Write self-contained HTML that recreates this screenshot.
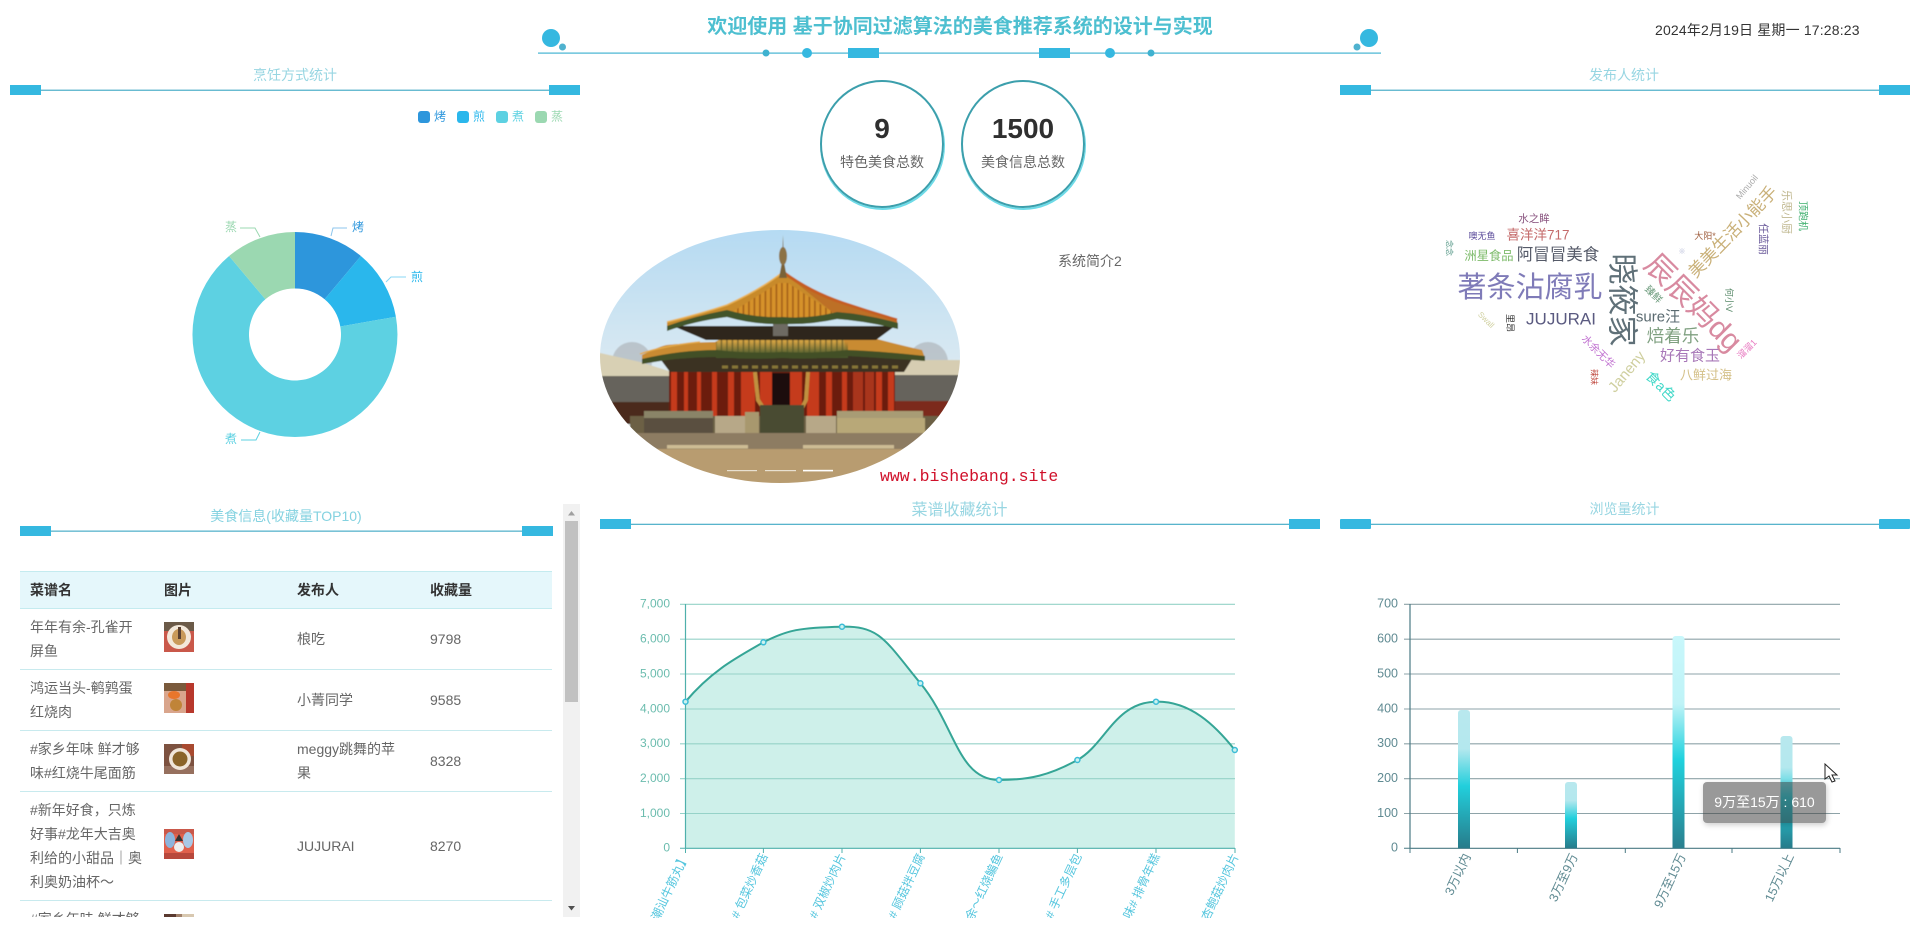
<!DOCTYPE html>
<html lang="zh-CN">
<head>
<meta charset="utf-8">
<title>基于协同过滤算法的美食推荐系统</title>
<style>
html,body{margin:0;padding:0;background:#fff;width:1920px;height:936px;overflow:hidden}
body{position:relative;font-family:"Liberation Sans","Noto Sans CJK SC",sans-serif}
svg text{font-family:"Liberation Sans","Noto Sans CJK SC",sans-serif}
#main{position:absolute;left:0;top:0}
.wrap{position:absolute;left:20px;top:571px;width:533px;height:346px;overflow:hidden}
table{border-collapse:collapse;table-layout:fixed;width:532px;font-size:14px;color:#666;line-height:24px}
th{height:36px;background:#e5f7fb;color:#333;text-align:left;padding:0 0 0 10px;font-weight:bold;border-top:1px solid #c4ebef;border-bottom:1px solid #c4ebef}
td{padding:0 0 0 10px;border-bottom:1px solid #c8eaee;white-space:nowrap;vertical-align:middle}
tr.r td{height:60px}
tr.b td{height:108px}
td svg{display:block;margin-top:-4px}
.sb{position:absolute;left:563px;top:504px;width:17px;height:413px;background:#f1f1f1}
.sb i{position:absolute;left:2px;top:17px;width:13px;height:181px;background:#c1c1c1}
.clock{position:absolute;left:1655px;top:20px;font-size:14px;line-height:20px;color:#333;white-space:nowrap;letter-spacing:.17px}
.title{position:absolute;left:560px;width:800px;top:12px;text-align:center;font-size:20px;line-height:30px;font-weight:bold;color:#4dbfd0}
.circle{position:absolute;top:80px;width:120px;height:124px;border:2.5px solid #3c9fac;border-radius:50%;box-shadow:.5px 1.5px 0 .5px #6ddbe8;text-align:center}
.circle b{display:block;font-size:28px;line-height:36px;margin-top:29px;color:#2f2f2f}
.circle span{display:block;font-size:14px;line-height:20px;color:#666;margin-top:5px}
.intro{position:absolute;left:1058px;top:251px;font-size:14px;line-height:20px;color:#666}
.site{position:absolute;left:880px;top:467px;font-family:"Liberation Mono",monospace;font-size:16.5px;line-height:20px;color:#d0102a;white-space:nowrap}
.tip{position:absolute;left:1703px;top:782px;width:123px;height:41px;background:rgba(60,60,60,.52);border-radius:4px;box-shadow:1px 2px 6px rgba(0,0,0,.2);color:#fff;font-size:14px;line-height:41px;text-align:center;white-space:nowrap}
</style>
</head>
<body>
<svg id="main" width="1920" height="936" viewBox="0 0 1920 936" xmlns="http://www.w3.org/2000/svg">
<defs>
<linearGradient id="sky" x1="0" y1="0" x2="0" y2="1"><stop offset="0" stop-color="#b4daf3"/><stop offset=".6" stop-color="#dfebf2"/><stop offset="1" stop-color="#e8e4da"/></linearGradient>
<pattern id="tile" width="5.5" height="10" patternUnits="userSpaceOnUse"><rect width="5.5" height="10" fill="#d6922c"/><rect width="1.8" height="10" fill="#a9651c"/></pattern>
<pattern id="tile2" width="5.5" height="10" patternUnits="userSpaceOnUse"><rect width="5.5" height="10" fill="#cfa043"/><rect width="1.8" height="10" fill="#8a7030"/></pattern>
<linearGradient id="gfade" x1="0" y1="0" x2="0" y2="1"><stop offset=".35" stop-color="#4d5c2e" stop-opacity="0"/><stop offset=".8" stop-color="#47582c" stop-opacity=".95"/></linearGradient>
<linearGradient id="bar1" x1="0" y1="0" x2="0" y2="1"><stop offset="0" stop-color="#b8e8ee"/><stop offset=".28" stop-color="#b4e8ee"/><stop offset=".55" stop-color="#22cfdc"/><stop offset="1" stop-color="#277b8a"/></linearGradient>
<linearGradient id="bar3" x1="0" y1="0" x2="0" y2="1"><stop offset="0" stop-color="#c8f7fb"/><stop offset=".32" stop-color="#bff3f7"/><stop offset=".58" stop-color="#20d2de"/><stop offset="1" stop-color="#2a7f8e"/></linearGradient>
<clipPath id="oval"><ellipse cx="780" cy="356.5" rx="180" ry="126.5"/></clipPath>
<clipPath id="xclip"><rect x="600" y="850" width="680" height="68"/></clipPath>
<filter id="soft" x="-5%" y="-5%" width="110%" height="110%"><feGaussianBlur stdDeviation=".45"/></filter>
</defs>

<!-- top header ornaments -->
<g fill="#35b8e0">
<rect x="538" y="52.5" width="843" height="1.2" fill="#45b4d2"/>
<circle cx="551" cy="38" r="9"/><circle cx="562.5" cy="47" r="3.5" fill="#4fb2cf"/>
<circle cx="1369" cy="38" r="9"/><circle cx="1357" cy="47" r="3.5" fill="#4fb2cf"/>
<circle cx="766" cy="53" r="3.5" fill="#3fb2d0"/><circle cx="807" cy="53" r="5"/>
<rect x="848" y="48" width="31" height="10"/><rect x="1039" y="48" width="31" height="10"/>
<circle cx="1110" cy="53" r="5"/><circle cx="1151" cy="53" r="3.5" fill="#3fb2d0"/>
</g>

<!-- panel headers -->
<g fill="#35b8e0">
<rect x="10" y="85" width="31" height="10"/><rect x="549" y="85" width="31" height="10"/>
<rect x="1340" y="85" width="31" height="10"/><rect x="1879" y="85" width="31" height="10"/>
<rect x="20" y="526" width="31" height="10"/><rect x="522" y="526" width="31" height="10"/>
<rect x="600" y="519" width="31" height="10"/><rect x="1289" y="519" width="31" height="10"/>
<rect x="1340" y="519" width="31" height="10" rx="1"/><rect x="1879" y="519" width="31" height="10" rx="1"/>
</g>
<g fill="#58b4cc">
<rect x="41" y="89.6" width="508" height="1.3"/><rect x="1371" y="89.6" width="508" height="1.3"/>
<rect x="51" y="530.5" width="471" height="1.3"/><rect x="631" y="523.7" width="658" height="1.3"/>
<rect x="1371" y="523.7" width="508" height="1.3"/>
</g>
<g fill="#98d6e2" text-anchor="middle" font-size="14">
<text x="295" y="80">烹饪方式统计</text>
<text x="1624" y="80">发布人统计</text>
<text x="286" y="521" fill="#84d2e0">美食信息(收藏量TOP10)</text>
<text x="959.5" y="515" font-size="16">菜谱收藏统计</text>
<text x="1624.5" y="514">浏览量统计</text>
</g>

<!-- legend -->
<rect x="418" y="111" width="12" height="12" rx="3" fill="#2d96dc"/><rect x="457" y="111" width="12" height="12" rx="3" fill="#2ab7ec"/>
<rect x="496" y="111" width="12" height="12" rx="3" fill="#5dd1e2"/><rect x="535" y="111" width="12" height="12" rx="3" fill="#9bd8b1"/>
<g font-size="12">
<text x="434" y="120.5" fill="#2d96dc">烤</text><text x="473" y="120.5" fill="#2ab7ec">煎</text>
<text x="512" y="120.5" fill="#5dd1e2">煮</text><text x="551" y="120.5" fill="#9bd8b1">蒸</text>
</g>

<!-- donut -->
<g>
<path d="M295,232 A102.5,102.5 0 0 1 360.9,256 L324.6,299.3 A46,46 0 0 0 295,288.5 Z" fill="#2d96dc"/>
<path d="M360.9,256 A102.5,102.5 0 0 1 395.9,316.7 L340.3,326.5 A46,46 0 0 0 324.6,299.3 Z" fill="#2ab7ec"/>
<path d="M395.9,316.7 A102.5,102.5 0 1 1 229.1,256 L265.4,299.3 A46,46 0 1 0 340.3,326.5 Z" fill="#5dd1e2"/>
<path d="M229.1,256 A102.5,102.5 0 0 1 295,232 L295,288.5 A46,46 0 0 0 265.4,299.3 Z" fill="#9bd8b1"/>
</g>
<g fill="none" stroke-width="1">
<path d="M331,236 L333,228 H347" stroke="#2d96dc" opacity=".55"/>
<path d="M386,282 L391,277 H406" stroke="#2ab7ec" opacity=".55"/>
<path d="M260,237 L255,228 H240" stroke="#9bd8b1"/>
<path d="M260,432 L256,440 H241" stroke="#5dd1e2"/>
</g>
<g font-size="12">
<text x="352" y="231" fill="#2d96dc">烤</text><text x="411" y="281" fill="#2ab7ec">煎</text>
<text x="225" y="231" fill="#9bd8b1">蒸</text><text x="225" y="443" fill="#5dd1e2">煮</text>
</g>

<!-- palace -->
<g clip-path="url(#oval)">
<g filter="url(#soft)">
<rect x="596" y="226" width="368" height="262" fill="url(#sky)"/>
<ellipse cx="632" cy="362" rx="20" ry="20" fill="#a9aeb0" opacity=".6"/>
<ellipse cx="928" cy="362" rx="20" ry="20" fill="#a9aeb0" opacity=".6"/>
<path d="M596,352 L640,362 L672,372 V380 H596Z" fill="#d8d0b4"/>
<path d="M890,360 H964 V378 H890Z" fill="#d6cdb2"/>
<rect x="596" y="376" width="76" height="26" fill="#66635c"/>
<rect x="890" y="375" width="74" height="27" fill="#66635c"/>
<rect x="596" y="402" width="76" height="22" fill="#4c2a1e"/>
<rect x="890" y="401" width="74" height="20" fill="#7c2a1c"/>
<!-- main hall body -->
<rect x="669" y="368" width="226" height="50" fill="#6c1e10"/>
<g fill="#c53a1b">
<rect x="671" y="370" width="6" height="47"/><rect x="684" y="370" width="4" height="47"/><rect x="697" y="370" width="4" height="47"/><rect x="712" y="370" width="5" height="47"/>
<rect x="728" y="370" width="6" height="47"/><rect x="741" y="372" width="14" height="45"/><rect x="760" y="372" width="12" height="45"/>
<rect x="790" y="372" width="12" height="45"/><rect x="807" y="372" width="12" height="45"/><rect x="826" y="370" width="6" height="47"/><rect x="842" y="370" width="5" height="47"/>
<rect x="853" y="372" width="10" height="45" fill="#a8341a"/><rect x="865" y="372" width="9" height="45" fill="#a8341a"/>
<rect x="876" y="370" width="6" height="47"/><rect x="888" y="370" width="6" height="47"/>
</g>
<rect x="772" y="373" width="18" height="32" fill="#1c0e0a"/>
<path d="M755,372 L758,400 L766,412 M808,372 L806,400 L800,412" stroke="#c0903f" stroke-width="4" fill="none"/>
<!-- brackets under lower roof -->
<path d="M658,356 H914 L904,372 H670Z" fill="#3a3222"/>
<path d="M722,367 H902" stroke="#857538" stroke-width="3" stroke-dasharray="6 4"/>
<!-- lower roof -->
<path d="M642,355 Q660,346 667,345 Q700,342 715,342 Q728,335 737,333 L817,333 L843,336 Q860,336 873,338 Q900,345 922,350 L925,358 Q880,355 847,354 Q810,358 783,356 Q750,357 717,354 Q680,354 642,361Z" fill="#c98b30"/>
<path d="M716,342 Q728,335 737,333 L817,333 L843,336 L847,354 Q810,358 783,356 Q750,357 717,354Z" fill="url(#tile2)"/>
<path d="M716,333 H848 V358 H716Z" fill="url(#gfade)" opacity=".9"/>
<path d="M642,359 Q680,350 717,350 Q750,354 783,352 Q810,354 847,350 Q880,351 925,356 L925,361 Q880,358 847,356 Q810,360 783,358 Q750,360 717,357 Q680,357 642,364Z" fill="#434f28"/>
<path d="M640,354 Q662,346 700,342" stroke="#e3a94a" stroke-width="1.4" fill="none"/>
<!-- upper floor dark -->
<path d="M673,326 L706,340 H876 L895,326Z" fill="#2e251a"/>
<rect x="773" y="323" width="15" height="13" fill="#6d6a62"/>
<!-- upper roof -->
<path d="M667,322 Q700,314 727,305 Q760,290 783,272 L837,314 Q810,322 783,320 Q755,322 727,314 Q695,318 667,328Z" fill="#c88a2c"/>
<path d="M783,272 Q810,292 843,303 Q870,312 897,320 L898,326 Q865,318 837,316 Z" fill="#bd6f26"/>
<path d="M729,314 L778,283 H788 L837,315 Q810,322 783,320 Q755,322 729,314Z" fill="url(#tile)"/>
<path d="M667,326 Q695,316 727,310 Q755,318 783,317 Q810,319 837,312 Q865,314 898,323 L898,329 Q865,321 837,319 Q810,325 783,324 Q755,325 727,317 Q695,321 667,331Z" fill="#43552a"/>
<path d="M667,322 Q700,314 727,305 Q760,290 783,272" stroke="#e9b356" stroke-width="1.6" fill="none"/>
<path d="M783,272 Q810,292 843,303 Q870,312 897,320" stroke="#c55f24" stroke-width="3" fill="none"/>
<path d="M783,235 L784,262 L787,278 H779 L782,262Z" fill="#7a6238"/>
<ellipse cx="783" cy="256" rx="4" ry="9" fill="#8c7244"/>
<!-- terrace -->
<rect x="630" y="416" width="310" height="18" fill="#6c6044"/>
<rect x="837" y="418" width="88" height="16" fill="#b8a878"/>
<rect x="644" y="418" width="69" height="15" fill="#5a5040"/>
<rect x="644" y="411" width="69" height="7" fill="#8a8468"/><rect x="837" y="411" width="86" height="7" fill="#a89c74"/>
<rect x="715" y="416" width="30" height="18" fill="#b7a888"/><rect x="806" y="416" width="30" height="18" fill="#b7a888"/>
<rect x="760" y="405" width="44" height="29" fill="#4a4c30"/>
<rect x="745" y="412" width="14" height="22" fill="#a8986e"/>
<rect x="596" y="433" width="368" height="18" fill="#8d7c62"/>
<rect x="667" y="445" width="81" height="3.5" fill="#cdbc94"/><rect x="803" y="445" width="91" height="3.5" fill="#cdbc94"/>
<rect x="596" y="449" width="368" height="40" fill="#b89c70"/>
</g>
<rect x="727" y="470" width="30" height="1.2" fill="#e8e0d0"/>
<rect x="765" y="470" width="31" height="1.2" fill="#e8e0d0"/>
<rect x="803" y="469.8" width="30" height="1.6" fill="#fff"/>
</g>

<!-- word cloud -->
<g text-anchor="middle" dominant-baseline="central">
<text transform="translate(1530,288)" font-size="29" fill="#7f7bb8">著条沾腐乳</text>
<text transform="translate(1622,300) rotate(90)" font-size="31" fill="#5f7078">晓筱家</text>
<text transform="translate(1693,303) rotate(45)" font-size="30" fill="#d88aa0">辰辰妈dg</text>
<text transform="translate(1733,232) rotate(-46)" font-size="17" fill="#c9b078">美美生活小能手</text>
<text x="1558" y="255" font-size="16.5" fill="#555a68">阿冒冒美食</text>
<text x="1489" y="256" font-size="12.3" fill="#7dbb6a">洲星食品</text>
<text x="1538" y="235" font-size="13.5" fill="#c46a6a">喜洋洋717</text>
<text x="1534" y="219" font-size="10.5" fill="#8a5580">水之眸</text>
<text x="1482" y="236" font-size="9" fill="#5a4a9a">噢无鱼</text>
<text transform="translate(1449,248) rotate(90)" font-size="8" fill="#5a9a8a">念念</text>
<text x="1561" y="319" font-size="17" fill="#5a5a80">JUJURAI</text>
<text x="1658" y="317" font-size="15" fill="#5a6a70">sure汪</text>
<text x="1673" y="336" font-size="17.5" fill="#7fa080">焙着乐</text>
<text x="1690" y="356" font-size="15" fill="#a878b8">好有食玉</text>
<text x="1706" y="375" font-size="13" fill="#d4c088">八鲜过海</text>
<text transform="translate(1598,352) rotate(45)" font-size="10.5" fill="#c070d0">水余无华</text>
<text transform="translate(1627,372) rotate(-50)" font-size="15" fill="#cfcf9f">Janeny</text>
<text transform="translate(1661,386) rotate(45)" font-size="14" fill="#40d8c8">食a色</text>
<text transform="translate(1594,377) rotate(90)" font-size="8" fill="#c04a40">辣妹</text>
<text transform="translate(1510,323) rotate(90)" font-size="9" fill="#333">里昂</text>
<text transform="translate(1486,320) rotate(45)" font-size="8" fill="#d0d0a0">Swall</text>
<text transform="translate(1653,295) rotate(45)" font-size="10" fill="#6a9a7a">臻鲜</text>
<text transform="translate(1729,300) rotate(90)" font-size="9" fill="#5a8a6a">何小V</text>
<text transform="translate(1747,349) rotate(-45)" font-size="9" fill="#e878c0">溜溜1</text>
<text x="1705" y="236" font-size="9" fill="#a06040">大阳*</text>
<text x="1682" y="252" font-size="7" fill="#aab0d0">※</text>
<text transform="translate(1747,187) rotate(-50)" font-size="9" fill="#aaa">Minuoil</text>
<text transform="translate(1763,239) rotate(90)" font-size="10.5" fill="#6a5a9a">任蓝丽</text>
<text transform="translate(1786,212) rotate(90)" font-size="11" fill="#c0b890">乐思小厨</text>
<text transform="translate(1802,216) rotate(90)" font-size="10" fill="#40b070">顶跑机</text>
</g>

<!-- line chart -->
<path d="M685.5,701.7 C712,670 738,657 763.4,642.3 C787,630 800,627.5 842,626.7 C880,626 885,640 920.4,683.3 C955,725 958,780 999,780 C1030,780 1050,775 1077.4,760 C1105,745 1115,702 1156,701.7 C1190,701 1215,725 1234.8,750 V848.3 H685.5Z" fill="#cef0ea"/>
<g stroke="#95d2c8" stroke-width="1.1">
<path d="M680,604.3H1235M680,639.2H1235M680,674H1235M680,709H1235M680,743.8H1235M680,778.7H1235M680,813.5H1235"/>
</g>
<path d="M685.5,604V848.3H1235" fill="none" stroke="#4fb0ac" stroke-width="1.2"/>
<path d="M680,848.3H686M685.5,848V853M763.4,848V853M842,848V853M920.4,848V853M999,848V853M1077.4,848V853M1156,848V853M1235,848V853" stroke="#4fb0ac" fill="none"/>
<path d="M685.5,701.7 C712,670 738,657 763.4,642.3 C787,630 800,627.5 842,626.7 C880,626 885,640 920.4,683.3 C955,725 958,780 999,780 C1030,780 1050,775 1077.4,760 C1105,745 1115,702 1156,701.7 C1190,701 1215,725 1234.8,750" fill="none" stroke="#35a596" stroke-width="2"/>
<g fill="#cdf2ee" stroke="#3cbcd6" stroke-width="1.5">
<circle cx="685.5" cy="701.7" r="2.5"/><circle cx="763.4" cy="642.3" r="2.5"/><circle cx="842" cy="626.7" r="2.5"/><circle cx="920.4" cy="683.3" r="2.5"/><circle cx="999" cy="780" r="2.5"/><circle cx="1077.4" cy="760" r="2.5"/><circle cx="1156" cy="701.7" r="2.5"/><circle cx="1234.8" cy="750" r="2.5"/>
</g>
<g font-size="12" fill="#6bbcae" text-anchor="end">
<text x="670" y="607.5">7,000</text><text x="670" y="642.5">6,000</text><text x="670" y="677.5">5,000</text><text x="670" y="712.5">4,000</text><text x="670" y="747">3,000</text><text x="670" y="782">2,000</text><text x="670" y="817">1,000</text><text x="670" y="851.5">0</text>
</g>
<g clip-path="url(#xclip)" font-size="12" fill="#55c6de" text-anchor="end">
<text transform="translate(689,856) rotate(-65)">潮汕牛筋丸】</text>
<text transform="translate(768,856) rotate(-65)"># 包菜炒香菇</text>
<text transform="translate(846,856) rotate(-65)"># 双椒炒肉片</text>
<text transform="translate(925,856) rotate(-65)"># 顾菇拌豆腐</text>
<text transform="translate(1003,856) rotate(-65)">余～红烧鳊鱼</text>
<text transform="translate(1082,856) rotate(-65)"># 手工多层包</text>
<text transform="translate(1160,856) rotate(-65)">味# 排骨年糕</text>
<text transform="translate(1239,856) rotate(-65)">杏鲍菇炒肉片</text>
</g>

<!-- bar chart -->
<g stroke="#8ea3a8" stroke-width="1.1">
<path d="M1404,604.3H1840M1404,639.2H1840M1404,674H1840M1404,709H1840M1404,743.8H1840M1404,778.7H1840M1404,813.5H1840"/>
</g>
<path d="M1410,604V848.3H1840" fill="none" stroke="#4a7a84" stroke-width="1.2"/>
<path d="M1404,848.3H1410M1410,848V853M1517.4,848V853M1625.3,848V853M1732,848V853M1840,848V853" stroke="#4a7a84" fill="none"/>
<path d="M1458,848.3V713a3,3 0 0 1 3,-3h6a3,3 0 0 1 3,3V848.3Z" fill="url(#bar1)"/>
<path d="M1565,848.3V785a3,3 0 0 1 3,-3h6a3,3 0 0 1 3,3V848.3Z" fill="url(#bar1)"/>
<path d="M1672.5,848.3V639a3,3 0 0 1 3,-3h6a3,3 0 0 1 3,3V848.3Z" fill="url(#bar3)"/>
<path d="M1780.5,848.3V739a3,3 0 0 1 3,-3h6a3,3 0 0 1 3,3V848.3Z" fill="url(#bar1)"/>
<g font-size="12.5" fill="#5f8a92" text-anchor="end">
<text x="1398" y="607.5">700</text><text x="1398" y="642.5">600</text><text x="1398" y="677.5">500</text><text x="1398" y="712.5">400</text><text x="1398" y="747">300</text><text x="1398" y="782">200</text><text x="1398" y="817">100</text><text x="1398" y="851.5">0</text>
<text transform="translate(1471,856) rotate(-65)">3万以内</text>
<text transform="translate(1578,856) rotate(-65)">3万至9万</text>
<text transform="translate(1686,856) rotate(-65)">9万至15万</text>
<text transform="translate(1794,856) rotate(-65)">15万以上</text>
</g>
<!-- cursor -->
<path d="M1825,764 V779 L1829,776 L1832,782 L1835,781 L1832,775 L1837,775Z" fill="#fff" stroke="#222" stroke-width="1"/>
</svg>

<div class="title">欢迎使用 基于协同过滤算法的美食推荐系统的设计与实现</div>
<div class="clock">2024年2月19日 星期一 17:28:23</div>
<div class="circle" style="left:820px"><b>9</b><span>特色美食总数</span></div>
<div class="circle" style="left:961px"><b>1500</b><span>美食信息总数</span></div>
<div class="intro">系统简介2</div>
<div class="site">www.bishebang.site</div>
<div class="tip">9万至15万 : 610</div>

<div class="wrap">
<table>
<colgroup><col style="width:134px"><col style="width:133px"><col style="width:133px"><col style="width:132px"></colgroup>
<tr><th>菜谱名</th><th>图片</th><th>发布人</th><th>收藏量</th></tr>
<tr class="r"><td>年年有余-孔雀开<br>屏鱼</td><td><svg width="30" height="30" viewBox="0 0 30 30"><rect width="30" height="30" fill="#c9584a"/><rect width="30" height="9" fill="#6b5a48"/><circle cx="15" cy="15" r="12" fill="#f3e8da"/><ellipse cx="15" cy="15" rx="7" ry="8" fill="#c99a5a"/><rect x="14" y="5" width="3" height="12" fill="#5a4030"/></svg></td><td>桹吃</td><td>9798</td></tr>
<tr class="r"><td>鸿运当头-鹌鹑蛋<br>红烧肉</td><td><svg width="30" height="30" viewBox="0 0 30 30"><rect width="30" height="30" fill="#d9a58c"/><rect width="30" height="8" fill="#7a5a3c"/><rect x="22" y="0" width="8" height="30" fill="#b8382c"/><ellipse cx="10" cy="12" rx="6" ry="4" fill="#e8762c"/><circle cx="12" cy="22" r="6" fill="#c08438"/></svg></td><td>小菁同学</td><td>9585</td></tr>
<tr class="r"><td>#家乡年味 鲜才够<br>味#红烧牛尾面筋</td><td><svg width="30" height="30" viewBox="0 0 30 30"><rect width="30" height="30" fill="#7d5240"/><rect x="18" y="0" width="12" height="12" fill="#a84a30"/><rect x="0" y="22" width="30" height="8" fill="#96705e"/><circle cx="16" cy="15" r="11" fill="#f0e6d8"/><circle cx="16" cy="15" r="7.5" fill="#8a6428"/></svg></td><td>meggy跳舞的苹<br>果</td><td>8328</td></tr>
<tr class="b"><td>#新年好食，只炼<br>好事#龙年大吉奥<br>利给的小甜品｜奥<br>利奥奶油杯～</td><td><svg width="30" height="30" viewBox="0 0 30 30"><rect width="30" height="30" fill="#e0604c"/><rect y="0" width="30" height="5" fill="#c9584a"/><ellipse cx="6" cy="11" rx="5" ry="8" fill="#8cb4dc"/><ellipse cx="24" cy="11" rx="5" ry="8" fill="#a8c8e6"/><ellipse cx="15" cy="18" rx="5" ry="5" fill="#eee"/><path d="M11,12 L15,5 L19,12Z" fill="#333"/><rect y="24" width="30" height="6" fill="#b8483c"/></svg></td><td>JUJURAI</td><td>8270</td></tr>
<tr class="r"><td>#家乡年味 鲜才够<br>味#排骨年糕</td><td><svg width="30" height="30" viewBox="0 0 30 30"><rect width="30" height="30" fill="#a0806a"/><rect width="12" height="8" fill="#5a3a30"/><rect x="18" width="12" height="8" fill="#d8c8b0"/></svg></td><td>味库</td><td>8200</td></tr>
</table>
</div>
<div class="sb"><i></i>
<svg width="17" height="413" style="position:absolute;left:0;top:0"><path d="M8.5,7 L5,11.5 H12Z" fill="#a0a0a0"/><path d="M5,402 H12 L8.5,406.5Z" fill="#505050"/></svg>
</div>
</body>
</html>
